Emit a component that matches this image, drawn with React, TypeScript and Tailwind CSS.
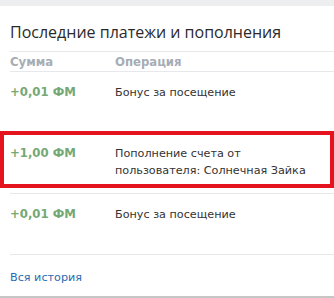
const rows = [
  { sum: "+0,01 ФМ", op: "Бонус за посещение" },
  { sum: "+1,00 ФМ", op: "Пополнение счета от пользователя: Солнечная Зайка", marked: true },
  { sum: "+0,01 ФМ", op: "Бонус за посещение" },
];

const App = () => {
  return (
    <div className="w-[334px] h-[298px] bg-[#edeef0] pt-[6px] overflow-hidden">
      <div className="bg-white h-[292px] border-b-2 border-[#c6c6c6] pl-[10px] flex flex-col">
        <h1 className="h-[46px] pt-[15px] text-[16px] leading-[22px] text-[#2a2a2a] font-['Open_Sans',sans-serif] border-b border-[#e7e8ec]">
          Последние платежи и пополнения
        </h1>
        <div className="flex h-[20px] pt-[2px] items-center text-[11.7px] font-bold text-[#a6adb4] font-['DejaVu_Sans',sans-serif] border-b border-[#e7e8ec]">
          <div className="w-[105px]">Сумма</div>
          <div>Операция</div>
        </div>
        {rows.map((r, i) => (
          <div key={i} className="relative">
            <div className="flex pt-[12px] h-[61px] leading-[17px] font-['DejaVu_Sans',sans-serif] border-b border-[#e7e8ec]">
              <div className="w-[105px] text-[11.7px] font-bold text-[#74a874]">{r.sum}</div>
              <div className="w-[205px] text-[11.2px] text-[#333]">{r.op}</div>
            </div>
            {r.marked && (
              <div className="absolute left-[-10px] top-[-2px] w-[334px] h-[57px] border-4 border-[#e5131d]" />
            )}
          </div>
        ))}
        <div className="pt-[14px] text-[11.2px] leading-[17px] text-[#2b6cb0] font-['DejaVu_Sans',sans-serif]">
          Вся история
        </div>
      </div>
    </div>
  );
};

export default App;
